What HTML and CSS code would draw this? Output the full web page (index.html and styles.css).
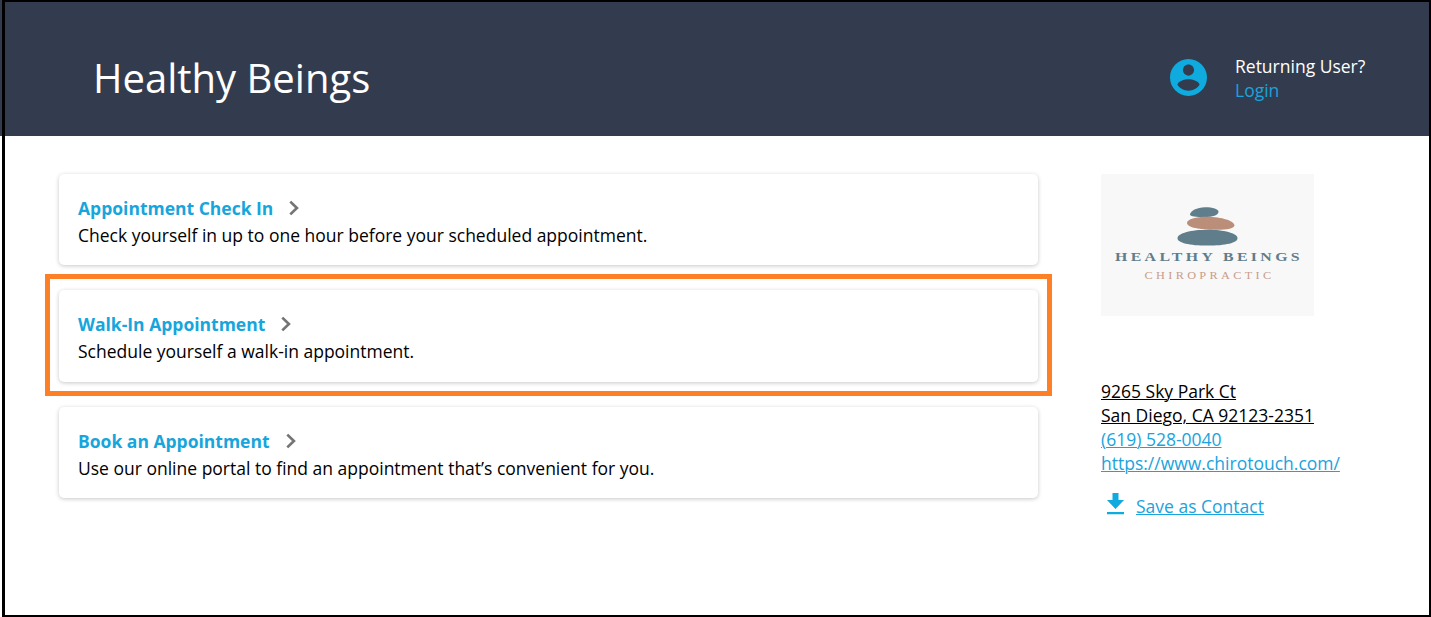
FILE: index.html
```html
<!DOCTYPE html>
<html lang="en">
<head>
<meta charset="utf-8">
<title>Healthy Beings</title>
<link rel="stylesheet" href="styles.css">
</head>
<body>
<header class="header">
  <h1 class="title">Healthy Beings</h1>
  <div class="account">
    <svg class="avatar" viewBox="2 2 20 20"><path fill="#0faade" d="M12 2C6.48 2 2 6.48 2 12s4.48 10 10 10 10-4.480 10-10S17.520 2 12 2zm0 3c1.660 0 3 1.340 3 3s-1.340 3-3 3-3-1.340-3-3 1.340-3 3-3zm0 14.200c-2.500 0-4.710-1.280-6-3.220.03-1.990 4-3.080 6-3.080 1.990 0 5.970 1.090 6 3.080-1.290 1.940-3.500 3.220-6 3.220z"/></svg>
    <div class="account-text"><div>Returning User?</div><a class="login">Login</a></div>
  </div>
</header>
<main class="main">
  <section class="cards">
    <article class="card">
      <h2 class="card-title"><span>Appointment Check In</span><svg class="chevron" viewBox="0 0 10 16"><path d="M1.300 1.600 7.900 8 1.300 14.400"/></svg></h2>
      <p class="card-text">Check yourself in up to one hour before your scheduled appointment.</p>
    </article>
    <article class="card card-marked">
      <h2 class="card-title"><span>Walk-In Appointment</span><svg class="chevron" viewBox="0 0 10 16"><path d="M1.300 1.600 7.900 8 1.300 14.400"/></svg></h2>
      <p class="card-text">Schedule yourself a walk-in appointment.</p>
      <div class="marker"></div>
    </article>
    <article class="card">
      <h2 class="card-title"><span>Book an Appointment</span><svg class="chevron" viewBox="0 0 10 16"><path d="M1.300 1.600 7.900 8 1.300 14.400"/></svg></h2>
      <p class="card-text">Use our online portal to find an appointment that’s convenient for you.</p>
    </article>
  </section>
  <aside class="aside">
    <svg class="logo" viewBox="0 0 213 142">
      <rect width="213" height="142" fill="#f8f8f8"/>
      <path fill="#607d8b" d="M89 40.500C89 37 96 33.200 104 33.200c8 0 13.500 2 13.500 4.500 0 3.500-6 5.300-14 5.300S89 42.500 89 40.500z"/>
      <path fill="#ba8e79" d="M86 49c0-3.800 9-6.200 20-6.200 15 0 27.500 4.400 27.500 8.400 0 3.200-7 4.600-18 4.600C99 55.800 86 53.500 86 49z"/>
      <path fill="#607d8b" d="M76.500 64.200c0-5 14-8.400 30-8.400s30 3.400 30 8.400c0 4.600-12 7.400-30 7.400s-30-2.800-30-7.400z"/>
      <text class="logo-name" x="14" y="86.600" textLength="188" lengthAdjust="spacingAndGlyphs">HEALTHY BEINGS</text>
      <text class="logo-sub" x="43.500" y="105" textLength="130" lengthAdjust="spacingAndGlyphs">CHIROPRACTIC</text>
    </svg>
    <address class="contact">
      <a class="address">9265 Sky Park Ct</a>
      <a class="address">San Diego, CA 92123-2351</a>
      <a>(619) 528-0040</a>
      <a>https://www.chirotouch.com/</a>
    </address>
    <div class="save">
      <svg class="download" viewBox="0 0 17 22"><path fill="#0faade" d="M5.500 0h6v7H17L8.500 16 0 7h5.500zM0 19h17v2.300H0z"/></svg>
      <a>Save as Contact</a>
    </div>
  </aside>
</main>
<div class="frame"></div>
</body>
</html>
```

FILE: styles.css
```css
* { box-sizing: border-box; }
body {
  margin: 0;
  height: 617px;
  overflow: hidden;
  position: relative;
  background: #fff;
  color: #000;
  font: 17.5px/24px "Open Sans", "Noto Sans", sans-serif;
}
h1, h2, p { margin: 0; }
.header {
  height: 136px;
  padding: 20px 65px 0 93px;
  display: flex;
  justify-content: space-between;
  align-items: flex-start;
  background: #323c4e;
  color: #fff;
}
.title { font-size: 40px; line-height: 116px; font-weight: 400; }
.account { display: flex; gap: 28.5px; padding-top: 34px; }
.avatar { width: 37px; height: 37px; margin-top: 5px; }
.account-text { width: 131px; white-space: nowrap; }
.login { color: #1aa3dc; }
.main { display: flex; gap: 63px; padding: 38px 0 0 59px; }
.cards { width: 979px; display: flex; flex-direction: column; gap: 25px; }
.card {
  position: relative;
  height: 91px;
  padding: 20px 19px;
  border-radius: 5px;
  background: #fff;
  box-shadow: 0 1px 4px rgba(0, 0, 0, 0.22);
}
.card-marked { height: 92px; }
.card-title {
  display: flex;
  align-items: center;
  gap: 16px;
  height: 27px;
  font-size: 17.5px;
  font-weight: 700;
  color: #16a5dc;
}
.chevron { width: 10px; height: 16px; fill: none; stroke: #757575; stroke-width: 2.7; }
.card-text { line-height: 29px; white-space: nowrap; }
.marker { position: absolute; inset: -16px -14px -14px; border: 5px solid #ff7f27; }
.aside { width: 245px; white-space: nowrap; }
.logo { display: block; width: 213px; height: 142px; }
.logo-name { font: bold 12.2px "Liberation Serif", serif; letter-spacing: 2.6px; fill: #607d8b; }
.logo-sub { font: 9.5px "Liberation Serif", serif; letter-spacing: 2.6px; fill: #c99c89; }
.contact {
  display: flex;
  flex-direction: column;
  align-items: flex-start;
  padding-top: 63px;
  font-style: normal;
}
.aside a { color: #1aa3dc; text-decoration: underline; text-decoration-thickness: 1px; }
.aside .address { color: #000; }
.save { display: flex; gap: 12px; padding: 19px 0 0 6px; }
.download { width: 17px; height: 22px; margin-top: -1px; }
.frame {
  position: absolute;
  inset: 0 0 0 2px;
  border: 2px solid #000;
  border-left-width: 3px;
}
```
